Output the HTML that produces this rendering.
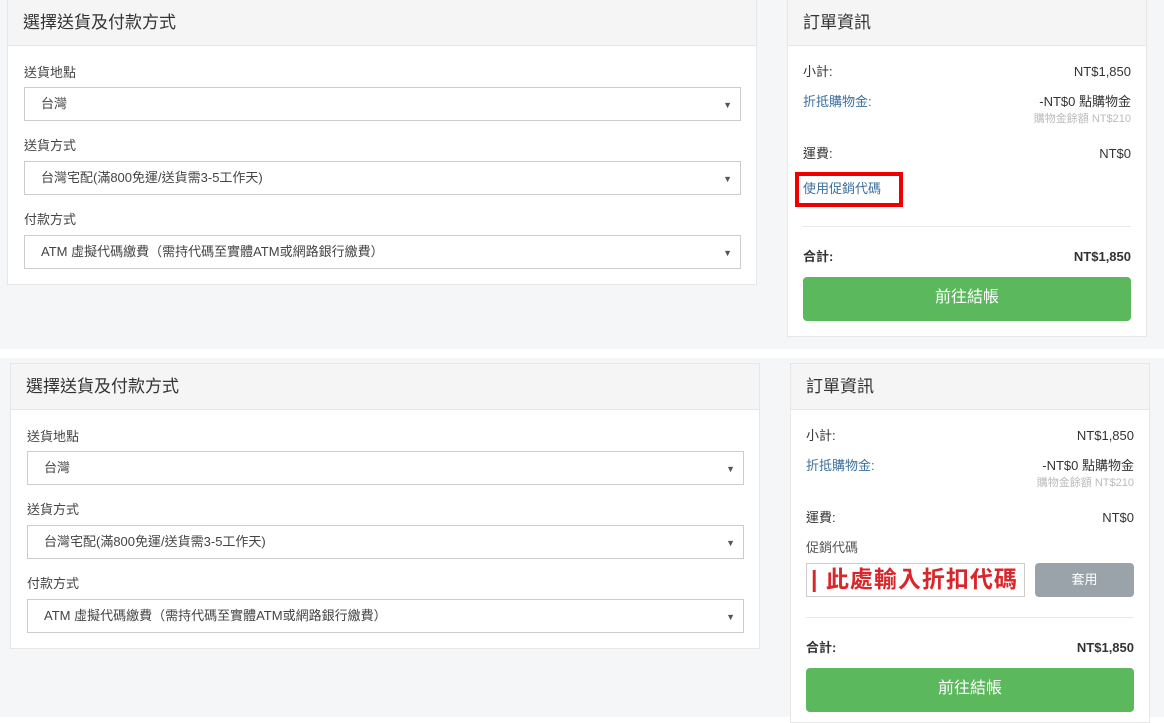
<!DOCTYPE html>
<html><head><meta charset="utf-8"><style>
*{box-sizing:border-box;margin:0;padding:0}
body{width:1164px;height:717px;position:relative;overflow:hidden;background:#fff;font-family:"Liberation Sans","Noto Sans CJK TC",sans-serif;color:#333;font-size:13px;line-height:18px}
.a{position:absolute;white-space:nowrap}
.bg{background:#f5f6f8}
.panel{position:absolute;background:#fff;border:1px solid #e6e6e6}
.hd{position:absolute;left:0;right:0;top:0;height:46px;background:#f5f5f5;border-bottom:1px solid #e6e6e6;font-size:17px;line-height:22px;padding:12px 0 0 15px;color:#333}
.sel{position:absolute;border:1px solid #ccc;background:#fff;height:34px;font-size:13px;line-height:18px;padding:7px 0 0 16px;color:#444;white-space:nowrap}
.sel:after{content:"▼";position:absolute;right:8px;top:8px;font-size:9px;color:#555}
.lbl{position:absolute;font-size:13px;color:#444}
.r{position:absolute;text-align:right;white-space:nowrap}
.blue{color:#3a6f9d}
.gray{color:#bbb;font-size:11px;line-height:14px}
.btn{position:absolute;background:#5cb85c;border-radius:4px;color:#fff;font-size:16px;line-height:22px;text-align:center;padding-top:10px}
.hr{position:absolute;height:1px;background:#e8e8e8}
</style></head><body>
<div class="a bg" style="left:0;top:0;width:1164px;height:349px"></div>
<div class="a bg" style="left:0;top:358px;width:1164px;height:359px"></div>

<div class="panel" style="left:7px;top:-1px;width:750px;height:286px">
<div class="hd">選擇送貨及付款方式</div></div>
<div class="lbl" style="left:24px;top:64px">送貨地點</div>
<div class="sel" style="left:24px;top:87px;width:717px">台灣</div>
<div class="lbl" style="left:24px;top:137px">送貨方式</div>
<div class="sel" style="left:24px;top:161px;width:717px">台灣宅配(滿800免運/送貨需3-5工作天)</div>
<div class="lbl" style="left:24px;top:211px">付款方式</div>
<div class="sel" style="left:24px;top:235px;width:717px">ATM 虛擬代碼繳費（需持代碼至實體ATM或網路銀行繳費）</div>

<div class="panel" style="left:787px;top:-1px;width:360px;height:338px">
<div class="hd">訂單資訊</div></div>
<div class="a" style="left:803px;top:63px">小計:</div><div class="r" style="right:33px;top:63px">NT$1,850</div>
<div class="a blue" style="left:803px;top:93px">折抵購物金:</div><div class="r" style="right:33px;top:93px">-NT$0 點購物金</div>
<div class="r gray" style="right:33px;top:112px">購物金餘額 NT$210</div>
<div class="a" style="left:803px;top:145px">運費:</div><div class="r" style="right:33px;top:145px">NT$0</div>
<div class="a" style="left:795px;top:172px;width:108px;height:35px;border:4px solid #e00;background:#fff"></div>
<div class="a blue" style="left:803px;top:180px">使用促銷代碼</div>
<div class="hr" style="left:803px;top:226px;width:328px"></div>
<div class="a" style="left:803px;top:248px;font-weight:bold">合計:</div><div class="r" style="right:33px;top:248px;font-weight:bold">NT$1,850</div>
<div class="btn" style="left:803px;top:277px;width:328px;height:44px">前往結帳</div>

<div class="panel" style="left:10px;top:363px;width:750px;height:286px">
<div class="hd">選擇送貨及付款方式</div></div>
<div class="lbl" style="left:27px;top:428px">送貨地點</div>
<div class="sel" style="left:27px;top:451px;width:717px">台灣</div>
<div class="lbl" style="left:27px;top:501px">送貨方式</div>
<div class="sel" style="left:27px;top:525px;width:717px">台灣宅配(滿800免運/送貨需3-5工作天)</div>
<div class="lbl" style="left:27px;top:575px">付款方式</div>
<div class="sel" style="left:27px;top:599px;width:717px">ATM 虛擬代碼繳費（需持代碼至實體ATM或網路銀行繳費）</div>

<div class="panel" style="left:790px;top:363px;width:360px;height:360px">
<div class="hd">訂單資訊</div></div>
<div class="a" style="left:806px;top:427px">小計:</div><div class="r" style="right:30px;top:427px">NT$1,850</div>
<div class="a blue" style="left:806px;top:457px">折抵購物金:</div><div class="r" style="right:30px;top:457px">-NT$0 點購物金</div>
<div class="r gray" style="right:30px;top:476px">購物金餘額 NT$210</div>
<div class="a" style="left:806px;top:509px">運費:</div><div class="r" style="right:30px;top:509px">NT$0</div>
<div class="a" style="left:806px;top:539px;color:#555">促銷代碼</div>
<div class="a" style="left:806px;top:563px;width:219px;height:34px;border:1px solid #ccc;color:#d9262b;font-size:23px;line-height:30px;font-weight:bold;padding:0 0 0 4px;letter-spacing:1px;white-space:nowrap;overflow:hidden">| 此處輸入折扣代碼</div>
<div class="a" style="left:1035px;top:563px;width:99px;height:34px;background:#9aa3a9;border-radius:4px;color:#fff;text-align:center;padding-top:8px">套用</div>
<div class="hr" style="left:806px;top:617px;width:328px"></div>
<div class="a" style="left:806px;top:639px;font-weight:bold">合計:</div><div class="r" style="right:30px;top:639px;font-weight:bold">NT$1,850</div>
<div class="btn" style="left:806px;top:668px;width:328px;height:44px">前往結帳</div>
</body></html>
